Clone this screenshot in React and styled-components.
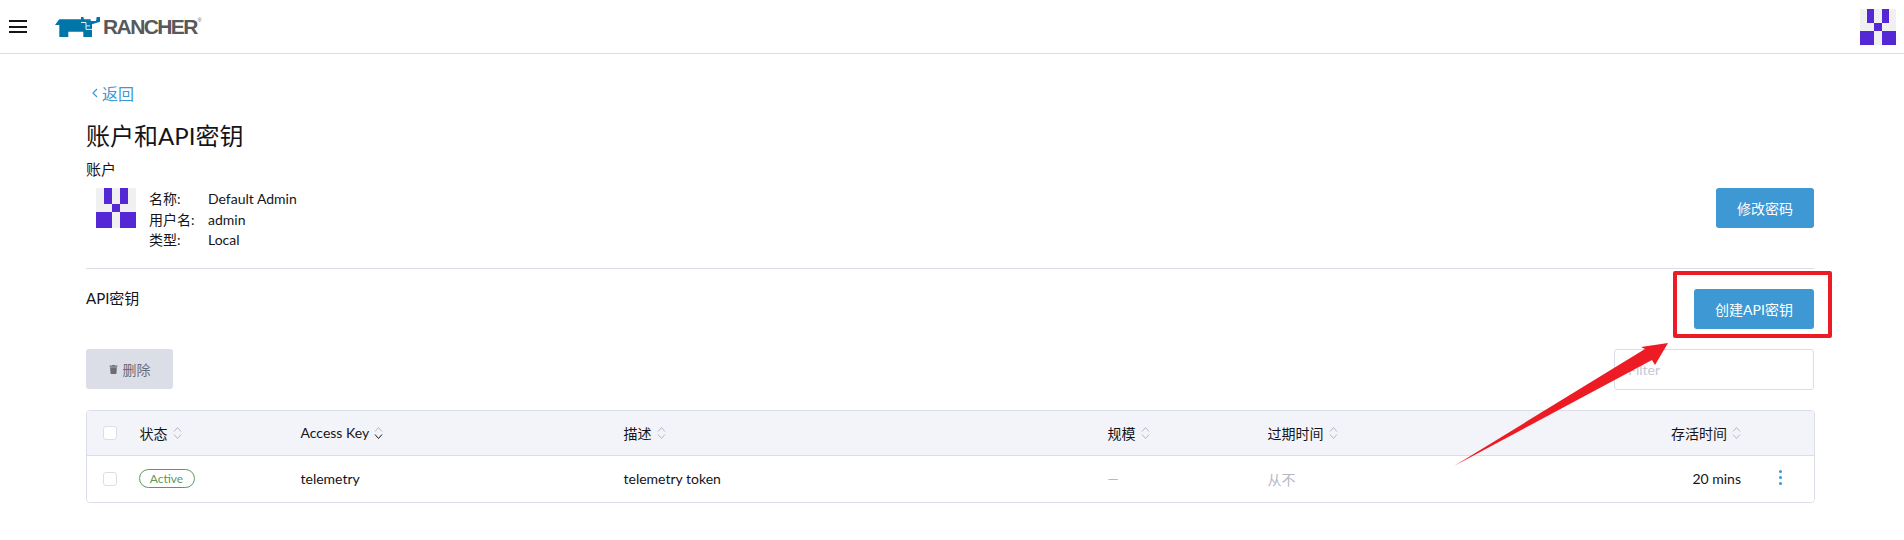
import React from 'react';
import styled, { createGlobalStyle } from 'styled-components';
import { FaTrash } from 'react-icons/fa';

const GlobalStyle = createGlobalStyle`
  html, body {
    margin: 0;
    padding: 0;
    background: #fff;
    overflow: hidden;
  }
  body {
    font-family: Lato, "Noto Sans CJK SC", sans-serif;
    font-size: 14px;
    color: #141419;
  }
  * { box-sizing: border-box; }
`;

const Page = styled.div`
  position: relative;
  width: 1904px;
  height: 540px;
  overflow: hidden;
`;

const Header = styled.header`
  height: 54px;
  border-bottom: 1px solid #dcdee7;
  display: flex;
  align-items: center;
  padding: 0 8px 0 9px;
`;

const Burger = styled.div`
  width: 18px;
  display: flex;
  flex-direction: column;
  gap: 3.6px;
  span {
    height: 2px;
    background: #141419;
  }
`;

const Logo = styled.div`
  display: flex;
  align-items: center;
  margin-left: 28px;
  color: #58595b;
  svg { margin-right: 3px; }
`;

const LogoText = styled.span`
  font-family: "Liberation Sans", sans-serif;
  font-weight: 700;
  font-size: 21px;
  letter-spacing: -1.6px;
  line-height: 20px;
  sup {
    font-size: 5px;
    font-weight: 400;
    vertical-align: 12px;
    line-height: 0;
    letter-spacing: 0;
    margin-left: 1px;
  }
`;

const HeaderAvatar = styled.div`
  margin-left: auto;
  height: 36px;
`;

const Main = styled.main`
  padding: 0 90px 0 86px;
`;

const BackLink = styled.a`
  display: flex;
  align-items: center;
  gap: 4px;
  margin: 29px 0 0 6px;
  height: 20px;
  color: #3d98d3;
  font-size: 16px;
`;

const Title = styled.h1`
  margin: 17px 0 0;
  font-size: 24px;
  font-weight: 400;
  line-height: 32px;
`;

const SubTitle = styled.h2`
  margin: ${(p) => p.$margin || 0};
  font-size: 15px;
  font-weight: 400;
  line-height: 20px;
`;

const AccountRow = styled.section`
  display: flex;
  align-items: flex-start;
  justify-content: space-between;
  margin-top: 9px;
  padding-left: 10px;
  padding-bottom: 17px;
  border-bottom: 1px solid #dcdee7;
`;

const AccountLeft = styled.div`
  display: flex;
  gap: 13px;
`;

const InfoGrid = styled.dl`
  margin: 1px 0 0;
  display: grid;
  grid-template-columns: 59px auto;
  line-height: 20.5px;
  dt, dd { margin: 0; }
`;

const Button = styled.button`
  height: 40px;
  width: ${(p) => p.$width}px;
  border: 0;
  border-radius: 3px;
  background: ${(p) => (p.$muted ? '#dcdee7' : '#3d98d3')};
  color: ${(p) => (p.$muted ? '#6c6c76' : '#fff')};
  font: inherit;
  display: flex;
  align-items: center;
  justify-content: center;
  gap: 5px;
  padding: 0;
`;

const ApiRow = styled.section`
  display: flex;
  align-items: flex-start;
  justify-content: space-between;
  margin-top: 20px;
`;

const ActionRow = styled.div`
  display: flex;
  align-items: center;
  justify-content: space-between;
  margin-top: 20px;
`;

const FilterInput = styled.input`
  width: 200px;
  height: 41px;
  border: 1px solid #dcdee7;
  border-radius: 3px;
  padding: 0 13px;
  font: inherit;
  outline: none;
  &::placeholder { color: #c6c7d3; opacity: 1; }
`;

const Table = styled.div`
  margin-top: 20px;
  width: 1729px;
  border: 1px solid #dcdee7;
  border-radius: 4px;
  overflow: hidden;
`;

const Row = styled.div`
  display: grid;
  grid-template-columns: 52.5px 161px 323px 484px 160px 1fr 250px 73px;
  align-items: center;
  height: ${(p) => (p.$head ? '45px' : '46px')};
  background: ${(p) => (p.$head ? '#f3f4f9' : '#fff')};
  border-bottom: ${(p) => (p.$head ? '1px solid #dcdee7' : '0')};
`;

const Cell = styled.div`
  display: flex;
  align-items: center;
  gap: 5px;
  justify-content: ${(p) => (p.$right ? 'flex-end' : 'flex-start')};
  color: ${(p) => (p.$dim ? '#b6b7c2' : 'inherit')};
`;

const Check = styled.span`
  display: block;
  width: 14px;
  height: 14px;
  margin-left: 16px;
  background: #fff;
  border: 1px solid #dcdee7;
  border-radius: 3px;
`;

const Badge = styled.span`
  display: inline-flex;
  align-items: center;
  justify-content: center;
  width: 56px;
  height: 19px;
  margin-left: -1px;
  border: 1px solid #5d995d;
  border-radius: 10px;
  color: #5d995d;
  font-size: 12px;
`;

const Kebab = styled.div`
  display: flex;
  flex-direction: column;
  gap: 3px;
  margin-left: 38px;
  margin-top: -3px;
  span {
    width: 3px;
    height: 3px;
    border-radius: 50%;
    background: #3d98d3;
  }
`;

const RedBox = styled.div`
  position: absolute;
  left: 1673px;
  top: 271px;
  width: 159px;
  height: 67px;
  border: 4px solid #ed1c24;
  border-radius: 2px;
`;

const ArrowLayer = styled.svg`
  position: absolute;
  left: 0;
  top: 0;
  pointer-events: none;
`;

const Avatar = ({ size }) => (
  <svg width={size} height={size} viewBox="0 0 5 5" shapeRendering="crispEdges" style={{ display: 'block' }}>
    <rect width="5" height="5" fill="#f0f0f0" />
    <path d="M1 0h1v2H1zM3 0h1v2H3zM2 2h1v1H2zM0 3h2v2H0zM3 3h2v2H3z" fill="#5528d6" />
  </svg>
);

const RancherMark = () => (
  <svg width="45" height="20" viewBox="0 0 45 20">
    <path
      d="M0 8 4.3 2.3H26V0h2.3l.7 2.3h6.7V4H41l.7-4H45v4.7L37 7.3V20h-8.7v-5.3h-15V20h-9V8z"
      fill="#0075a8"
    />
    <path d="M26 5.5h5v3.4h4M31 8.9v3.5h6" fill="none" stroke="#fff" strokeWidth="0.9" />
  </svg>
);

const SortIcon = ({ active }) => (
  <svg width="9" height="14" viewBox="0 0 9 14" fill="none" strokeWidth="1">
    <path d="M1 5.5 4.5 1.5 8 5.5" stroke="#b6b7c2" />
    <path d="M1 8.5 4.5 12.5 8 8.5" stroke={active ? '#141419' : '#b6b7c2'} />
  </svg>
);

const BackChevron = () => (
  <svg width="6" height="10" viewBox="0 0 6 10" fill="none" stroke="#3d98d3" strokeWidth="1.2">
    <path d="M5 1 1 5l4 4" />
  </svg>
);

const columns = [
  { label: '状态' },
  { label: 'Access Key', active: true },
  { label: '描述' },
  { label: '规模' },
  { label: '过期时间' },
];

const App = () => (
  <Page>
    <GlobalStyle />
    <Header>
      <Burger>
        <span />
        <span />
        <span />
      </Burger>
      <Logo>
        <RancherMark />
        <LogoText>
          RANCHER<sup>®</sup>
        </LogoText>
      </Logo>
      <HeaderAvatar>
        <Avatar size={36} />
      </HeaderAvatar>
    </Header>

    <Main>
      <BackLink>
        <BackChevron />
        返回
      </BackLink>
      <Title>账户和API密钥</Title>
      <SubTitle $margin="7px 0 0">账户</SubTitle>
      <AccountRow>
        <AccountLeft>
          <Avatar size={40} />
          <InfoGrid>
            <dt>名称:</dt>
            <dd>Default Admin</dd>
            <dt>用户名:</dt>
            <dd>admin</dd>
            <dt>类型:</dt>
            <dd>Local</dd>
          </InfoGrid>
        </AccountLeft>
        <Button $width={98}>修改密码</Button>
      </AccountRow>

      <ApiRow>
        <SubTitle $margin="-1px 0 0">API密钥</SubTitle>
        <Button $width={120}>创建API密钥</Button>
      </ApiRow>

      <ActionRow>
        <Button $muted $width={87}>
          <FaTrash size={9} />
          删除
        </Button>
        <FilterInput placeholder="Filter" />
      </ActionRow>

      <Table>
        <Row $head>
          <Check />
          {columns.map((c) => (
            <Cell key={c.label}>
              {c.label}
              <SortIcon active={c.active} />
            </Cell>
          ))}
          <Cell $right>
            存活时间
            <SortIcon />
          </Cell>
          <div />
        </Row>
        <Row>
          <Check />
          <Cell>
            <Badge>Active</Badge>
          </Cell>
          <Cell>telemetry</Cell>
          <Cell>telemetry token</Cell>
          <Cell $dim>—</Cell>
          <Cell $dim>从不</Cell>
          <Cell $right>20 mins</Cell>
          <Kebab>
            <span />
            <span />
            <span />
          </Kebab>
        </Row>
      </Table>
    </Main>

    <RedBox />
    <ArrowLayer width="1904" height="540" viewBox="0 0 1904 540">
      <path d="M1454 466 1645 349 1641 347 1668 343 1655 365 1652 360z" fill="#ed1c24" />
    </ArrowLayer>
  </Page>
);

export default App;
